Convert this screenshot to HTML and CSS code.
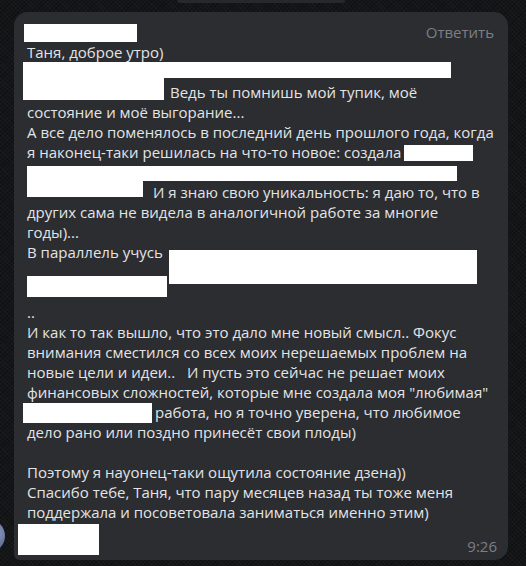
FILE: index.html
```html
<!DOCTYPE html>
<html lang="ru">
<head>
<meta charset="utf-8">
<link rel="stylesheet" href="styles.css">
</head>
<body>
<div class="prev"></div>
<div class="row">
  <div class="avatar"></div>
  <div class="bubble">
    <div class="head"><span class="reply">Ответить</span></div>
    <div class="text">
      <div class="ln">Таня, доброе утро)</div>
      <div class="ln">&nbsp;</div>
      <div class="ln"><span class="gap g3"></span>Ведь ты помнишь мой тупик, моё</div>
      <div class="ln">состояние и моё выгорание...</div>
      <div class="ln">А все дело поменялось в последний день прошлого года, когда</div>
      <div class="ln">я наконец-таки решилась на что-то новое: создала</div>
      <div class="ln">&nbsp;</div>
      <div class="ln"><span class="gap g8"></span>И я знаю свою уникальность: я даю то, что в</div>
      <div class="ln">других сама не видела в аналогичной работе за многие</div>
      <div class="ln">годы)...</div>
      <div class="ln">В параллель учусь</div>
      <div class="ln">&nbsp;</div>
      <div class="ln">&nbsp;</div>
      <div class="ln">..</div>
      <div class="ln">И как то так вышло, что это дало мне новый смысл.. Фокус</div>
      <div class="ln">внимания сместился со всех моих нерешаемых проблем на</div>
      <div class="ln">новые цели и идеи..&nbsp;&nbsp; И пусть это сейчас не решает моих</div>
      <div class="ln">финансовых сложностей, которые мне создала моя "любимая"</div>
      <div class="ln"><span class="gap g19"></span>работа, но я точно уверена, что любимое</div>
      <div class="ln">дело рано или поздно принесёт свои плоды)</div>
      <div class="ln">&nbsp;</div>
      <div class="ln">Поэтому я науонец-таки ощутила состояние дзена))</div>
      <div class="ln">Спасибо тебе, Таня, что пару месяцев назад ты тоже меня</div>
      <div class="ln">поддержала и посоветовала заниматься именно этим)</div>
    </div>
    <div class="foot"><span class="time">9:26</span></div>

    <div class="red r-name"></div>
    <div class="red r2a"></div>
    <div class="red r2b"></div>
    <div class="red r6"></div>
    <div class="red r7a"></div>
    <div class="red r7b"></div>
    <div class="red r11"></div>
    <div class="red r12"></div>
    <div class="red r19"></div>
    <div class="red r-foot"></div>
  </div>
</div>
</body>
</html>
```
FILE: styles.css
```css
html, body {
  margin: 0;
  padding: 0;
}
body {
  width: 526px;
  height: 566px;
  overflow: hidden;
  background-color: #141517;
  background-image:
    repeating-linear-gradient(45deg, rgba(255,255,255,0.025) 0 1px, transparent 1px 3px),
    repeating-linear-gradient(-45deg, rgba(0,0,0,0.25) 0 1px, transparent 1px 3px);
  font-family: "Open Sans", "Noto Sans", sans-serif;
}
.prev {
  width: 168px;
  height: 3px;
  margin-left: 177px;
  background: #26282c;
  border-radius: 0 0 10px 10px;
}
.row {
  display: flex;
  align-items: flex-end;
  margin-top: 9px;
}
.avatar {
  flex: none;
  width: 34px;
  height: 34px;
  border-radius: 50%;
  margin-left: -29px;
  margin-right: 9px;
  margin-bottom: 7px;
  background: radial-gradient(circle at 70% 40%, #8e9cc4, #4a5680 70%);
}
.bubble {
  position: relative;
  width: 494px;
  height: 548px;
  box-sizing: border-box;
  padding: 10px 14px 0 13px;
  background: #2b2d31;
  border-radius: 14px 14px 14px 6px;
  color: #e3e4e6;
}
.head {
  height: 20px;
  display: flex;
  justify-content: flex-end;
  align-items: center;
}
.reply {
  font-size: 15px;
  color: #7b7f87;
  line-height: 20px;
}
.text {
  font-size: 15px;
  line-height: 20px;
}
.ln {
  white-space: nowrap;
  height: 20px;
}
.gap {
  display: inline-block;
  height: 1px;
}
.g3 { width: 143px; }
.g8 { width: 126px; }
.g19 { width: 128px; }
.foot {
  height: 37px;
  display: flex;
  justify-content: flex-end;
  align-items: flex-end;
}
.time {
  font-size: 15px;
  line-height: 20px;
  color: #7b7f87;
  margin-right: -3px;
  padding-bottom: 3px;
}
.red {
  position: absolute;
  background: #ffffff;
}
.r-name { left: 10px; top: 12px; width: 113px; height: 18px; }
.r2a { left: 9px; top: 50px; width: 428px; height: 16px; }
.r2b { left: 9px; top: 66px; width: 141px; height: 22px; }
.r6 { left: 390px; top: 133px; width: 69px; height: 16px; }
.r7a { left: 13px; top: 154px; width: 430px; height: 15px; }
.r7b { left: 13px; top: 169px; width: 116px; height: 16px; }
.r11 { left: 155px; top: 238px; width: 308px; height: 34px; }
.r12 { left: 13px; top: 264px; width: 140px; height: 21px; }
.r19 { left: 9px; top: 391px; width: 129px; height: 20px; }
.r-foot { left: 4px; top: 512px; width: 81px; height: 31px; }
```
